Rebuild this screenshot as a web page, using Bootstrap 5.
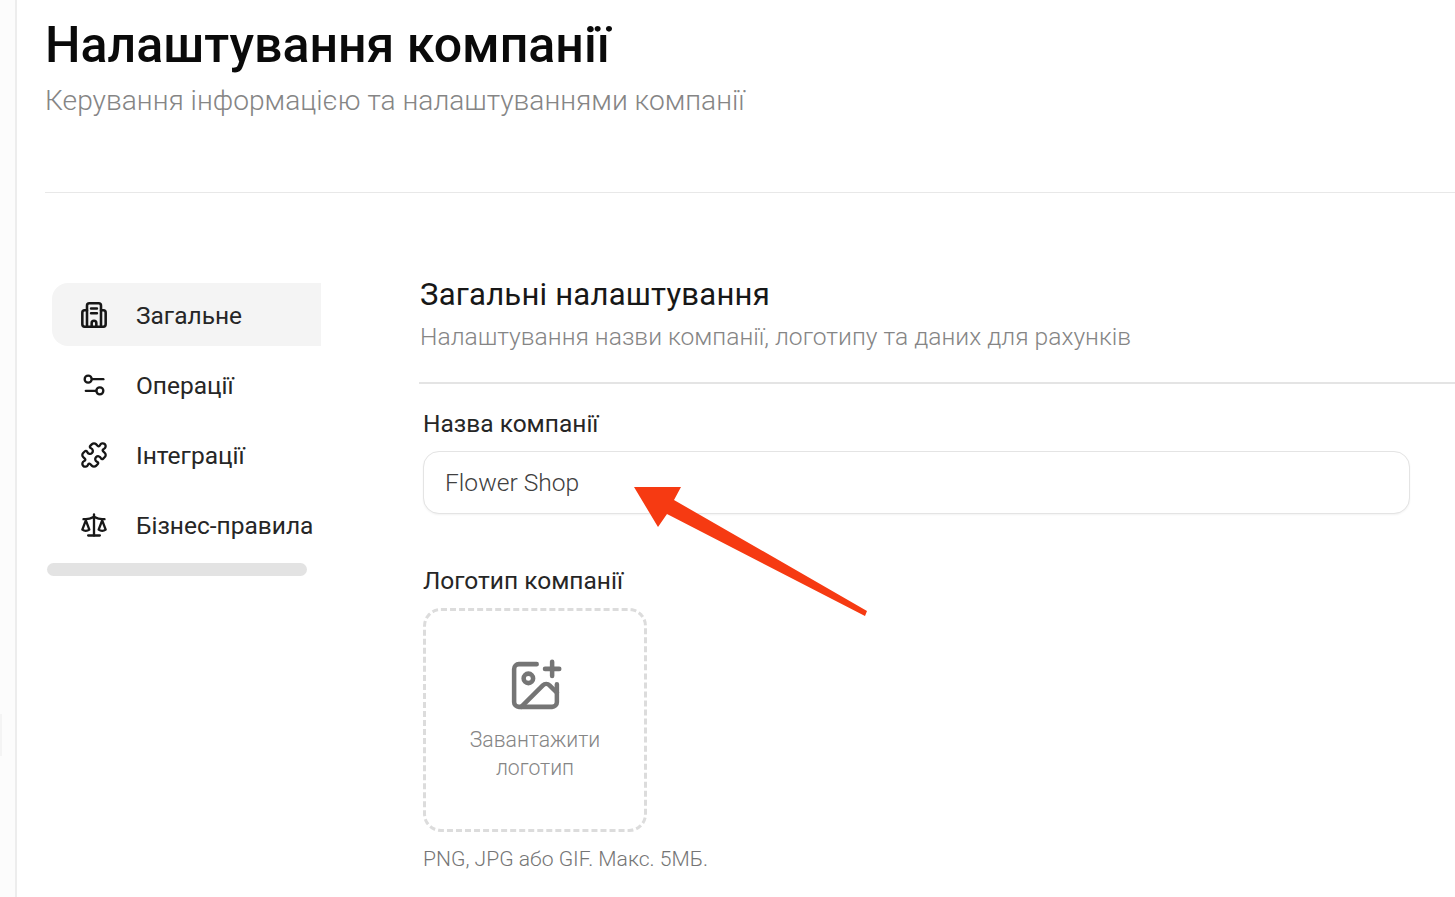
<!DOCTYPE html>
<html lang="uk">
<head>
<meta charset="utf-8">
<title>Налаштування компанії</title>
<link href="https://cdn.jsdelivr.net/npm/bootstrap@5.3.0/dist/css/bootstrap.min.css" rel="stylesheet">
<style>
html,body{height:897px;overflow:hidden;background:#fff}
body{font-family:Roboto,"Liberation Sans",sans-serif;color:#171717;position:relative}
.rail{width:17px;height:897px;background:#fcfcfc;border-right:2px solid #ededed;flex:none}
.rail-tab{position:absolute;left:0;top:714px;width:2px;height:42px;background:#f4f4f4}
.page{flex:1;min-width:0;padding-left:28px}
.page-head{height:193px;border-bottom:1px solid #e8e8e8;padding-top:15px}
.page-title{font-size:50.1px;line-height:60px;font-weight:500;color:#0a0a0a;margin:0}
.page-sub{font-size:28.15px;line-height:34px;color:#858585;margin:9px 0 0;font-weight:300}
.side{width:374px;flex:none;padding:90px 0 0 7px}
.side-item{width:269px;height:63px;display:flex;align-items:center;gap:28px;padding-left:28px;font-size:24.5px;color:#262626;margin-bottom:7px;text-decoration:none}
.side-item span{padding-top:3px}
.side-item.is-on{background:#f4f4f4;border-radius:16px 0 0 16px}
.side-item svg{width:28px;height:28px;flex:none}
.side-bar{width:260px;height:13px;background:#e3e3e3;border-radius:7px;margin:2px 0 0 -5px}
.panel{flex:1;min-width:0;padding-top:82px}
.panel-title{font-size:31.1px;line-height:40px;font-weight:400;letter-spacing:.2px;margin:0 0 0 1px;color:#171717}
.panel-sub{font-size:24.64px;line-height:32px;color:#858585;margin:6px 0 0 1px;font-weight:300}
.panel-rule{border-top:2px solid #e4e4e4;margin-top:29px}
.panel-body{padding:24px 45px 0 4px}
.fld-label{font-size:24.5px;line-height:32px;font-weight:450;color:#262626;margin:0;display:block}
.fld-input{height:63px;border:1px solid #e4e4e4;border-radius:16px;font-size:24.6px;font-weight:300;padding:0 21px;color:#404040;margin-top:11px;box-shadow:0 1px 2px rgba(0,0,0,.05);font-family:inherit}
.fld-gap{margin-top:51px}
.drop{width:224px;height:224px;border:3px dashed #dcdcdc;border-radius:18px;margin-top:11px;display:flex;flex-direction:column;align-items:center;padding-top:46px;color:#858585;font-size:21.2px;font-weight:300;line-height:28px;text-align:center}
.drop svg{width:57px;height:57px;margin-bottom:12px}
.hint{font-size:21.1px;font-weight:300;line-height:28px;color:#757575;margin:13px 0 0}
.arrow{position:absolute;left:0;top:0;width:1455px;height:897px;pointer-events:none}
</style>
</head>
<body class="d-flex">
<div class="rail"></div><div class="rail-tab"></div>
<main class="page">
  <header class="page-head">
    <h1 class="page-title">Налаштування компанії</h1>
    <p class="page-sub">Керування інформацією та налаштуваннями компанії</p>
  </header>
  <div class="d-flex">
    <nav class="side">
      <a class="side-item is-on" href="#"><svg viewBox="0 0 24 24" fill="none" stroke="#171717" stroke-width="2.200" stroke-linejoin="round" stroke-linecap="round"><path d="M6 22V4a2 2 0 0 1 2-2h8a2 2 0 0 1 2 2v18z"/><path d="M6 8H4a2 2 0 0 0-2 2v10a2 2 0 0 0 2 2h2"/><path d="M18 8h2a2 2 0 0 1 2 2v10a2 2 0 0 1-2 2h-2"/><path d="M9.500 6.500h5M9.500 10.500h5M10 22v-3a2 2 0 0 1 4 0v3"/></svg><span>Загальне</span></a>
      <a class="side-item" href="#"><svg viewBox="0 0 24 24" fill="none" stroke="#171717" stroke-width="2" stroke-linecap="round" stroke-linejoin="round"><path d="M20 7h-9"/><path d="M14 17H5"/><circle cx="17" cy="17" r="3"/><circle cx="7" cy="7" r="3"/></svg><span>Операції</span></a>
      <a class="side-item" href="#"><svg viewBox="0 0 24 24" fill="none" stroke="#171717" stroke-width="2" stroke-linejoin="round" stroke-linecap="round"><path d="M19.439 7.85c-.049.322.059.648.289.878l1.568 1.568c.47.47.706 1.087.706 1.704s-.235 1.233-.706 1.704l-1.611 1.611a.98.98 0 0 1-.837.276c-.47-.07-.802-.48-.968-.925a2.501 2.501 0 1 0-3.214 3.214c.446.166.855.497.925.968a.979.979 0 0 1-.276.837l-1.61 1.61a2.404 2.404 0 0 1-1.705.707 2.402 2.402 0 0 1-1.704-.706l-1.568-1.568a1.026 1.026 0 0 0-.877-.29c-.493.074-.84.504-1.02.968a2.5 2.5 0 1 1-3.237-3.237c.464-.18.894-.527.967-1.02a1.026 1.026 0 0 0-.289-.877l-1.568-1.568A2.402 2.402 0 0 1 1.998 12c0-.617.236-1.234.706-1.704L4.23 8.77c.24-.24.581-.353.917-.303.515.077.877.528 1.073 1.01a2.5 2.5 0 1 0 3.259-3.259c-.482-.196-.933-.558-1.01-1.073-.05-.336.062-.676.303-.917l1.525-1.525A2.402 2.402 0 0 1 12 1.998c.617 0 1.234.236 1.704.706l1.568 1.568c.23.23.556.338.877.29.493-.074.84-.504 1.02-.968a2.5 2.5 0 1 1 3.237 3.237c-.464.18-.894.527-.967 1.02Z"/></svg><span>Інтеграції</span></a>
      <a class="side-item" href="#"><svg viewBox="0 0 24 24" fill="none" stroke="#171717" stroke-width="2" stroke-linejoin="round" stroke-linecap="round"><path d="m16 16 3-8 3 8c-.87.65-1.92 1-3 1s-2.130-.35-3-1Z"/><path d="m2 16 3-8 3 8c-.87.65-1.920 1-3 1s-2.130-.35-3-1Z"/><path d="M7 21h10"/><path d="M12 3v18"/><path d="M3 7h2c2 0 5-1 7-2 2 1 5 2 7 2h2"/></svg><span>Бізнес-правила</span></a>
      <div class="side-bar"></div>
    </nav>
    <section class="panel">
      <h2 class="panel-title">Загальні налаштування</h2>
      <p class="panel-sub">Налаштування назви компанії, логотипу та даних для рахунків</p>
      <div class="panel-rule"></div>
      <div class="panel-body">
        <label class="fld-label" for="cn">Назва компанії</label>
        <input id="cn" class="form-control fld-input" value="Flower Shop">
        <div class="fld-label fld-gap">Логотип компанії</div>
        <div class="drop">
          <svg viewBox="0 0 24 24" fill="none" stroke="#757575" stroke-width="1.900" stroke-linecap="round" stroke-linejoin="round"><path d="M16 5h6"/><path d="M19 2v6"/><path d="M21 11.500V19a2 2 0 0 1-2 2H5a2 2 0 0 1-2-2V5a2 2 0 0 1 2-2h7.500"/><path d="m21 15-3.086-3.086a2 2 0 0 0-2.828 0L6 21"/><circle cx="9" cy="9" r="2"/></svg>
          <span>Завантажити<br>логотип</span>
        </div>
        <p class="hint">PNG, JPG або GIF. Макс. 5МБ.</p>
      </div>
    </section>
  </div>
</main>
<svg class="arrow" viewBox="0 0 1455 897"><polygon fill="#f63a12" points="634,487 681,487 674,500 867,611 865,616 667,514 658,527"/></svg>
<script src="https://cdn.jsdelivr.net/npm/bootstrap@5.3.0/dist/js/bootstrap.bundle.min.js"></script>
</body>
</html>
